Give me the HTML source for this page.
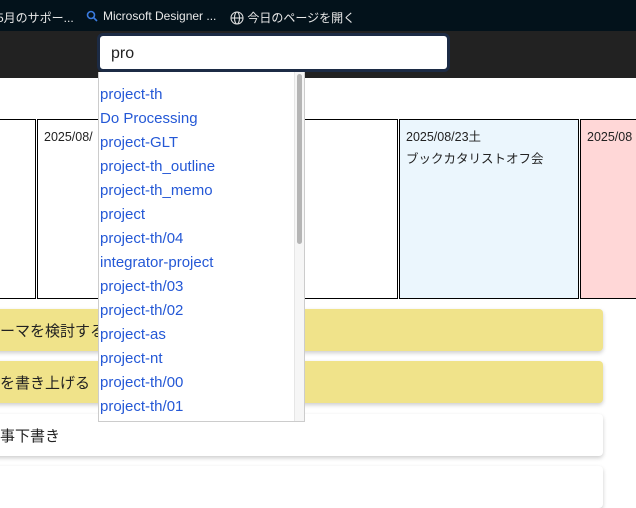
<!DOCTYPE html>
<html><head><meta charset="utf-8"><style>
*{box-sizing:border-box;margin:0;padding:0}
body{width:636px;height:481px;overflow:hidden;background:#fff;font-family:"Liberation Sans","Noto Sans CJK JP",sans-serif;position:relative}
.top{position:absolute;left:0;top:0;width:636px;height:31px;background:#03121b;color:#e8e8e8;font-size:12px}
.top span{position:absolute;top:9px;white-space:nowrap}
.bar2{position:absolute;left:0;top:31px;width:636px;height:47px;background:#222}
.search{position:absolute;left:97px;top:33px;width:353px;height:39px;background:#fff;border:3px solid #1c2b45;border-radius:6px;font-size:16px;padding:9px 0 0 11px;color:#222}
.card{position:absolute;top:119px;height:180px;width:180px;border:1px solid #000;font-size:12.5px;color:#222;padding:6px 0 0 6px;line-height:22px}
.row{position:absolute;left:-10px;width:613px;height:42px;border-radius:4px;box-shadow:0 2px 4px rgba(0,0,0,.2);font-size:15px;padding:11px 0 0 10px;color:#222}
.dd{position:absolute;left:98px;top:72px;width:207px;height:350px;background:#fff;border:1px solid #ccc;border-top:none;overflow:hidden}
.dd .it{font-size:15px;color:#2458d6;line-height:24px;height:24px;padding-left:1px}
.dd .sb{position:absolute;right:0;top:0;width:10px;height:350px;background:#f6f6f6;border-left:1px solid #e6e6e6}
.dd .th{position:absolute;left:2px;top:2px;width:5px;height:170px;background:#b5b5b5;border-radius:3px}
</style></head><body>
<div class="top">
<span style="left:-3px">5月のサポー...</span>
<span style="left:86px"><svg width="12" height="12" viewBox="0 0 12 12" style="vertical-align:-2px" fill="none" stroke="#3a7be0" stroke-width="1.6"><circle cx="5" cy="5" r="3.5"/><path d="M7.5 7.5L11 11"/></svg></span>
<span style="left:103px">Microsoft Designer ...</span>
<span style="left:230px"><svg width="14" height="14" viewBox="0 0 14 14" style="vertical-align:-3px" fill="none" stroke="#ddd" stroke-width="1.1"><circle cx="7" cy="7" r="6"/><ellipse cx="7" cy="7" rx="2.5" ry="6"/><path d="M1 7h12"/></svg> 今日のページを開く</span>
</div>
<div class="bar2"></div>
<div class="search">pro</div>
<div class="card" style="left:-1px;width:37px"></div>
<div class="card" style="left:37px">2025/08/</div>
<div class="card" style="left:218px"></div>
<div class="card" style="left:399px;background:#ebf6fd">2025/08/23土<br>ブックカタリストオフ会</div>
<div class="card" style="left:580px;background:#ffd7d7;width:70px">2025/08</div>
<div class="row" style="top:309px;background:#f0e38a">ーマを検討する</div>
<div class="row" style="top:361px;background:#f0e38a">を書き上げる</div>
<div class="row" style="top:414px;background:#fff">事下書き</div>
<div class="row" style="top:466px;background:#fff"></div>
<div class="dd">
<div class="it" style="margin-top:11px">project-th</div><div class="it">Do Processing</div><div class="it">project-GLT</div><div class="it">project-th_outline</div><div class="it">project-th_memo</div><div class="it">project</div><div class="it">project-th/04</div><div class="it">integrator-project</div><div class="it">project-th/03</div><div class="it">project-th/02</div><div class="it">project-as</div><div class="it">project-nt</div><div class="it">project-th/00</div><div class="it">project-th/01</div>
<div class="sb"><div class="th"></div></div>
</div>
</body></html>
